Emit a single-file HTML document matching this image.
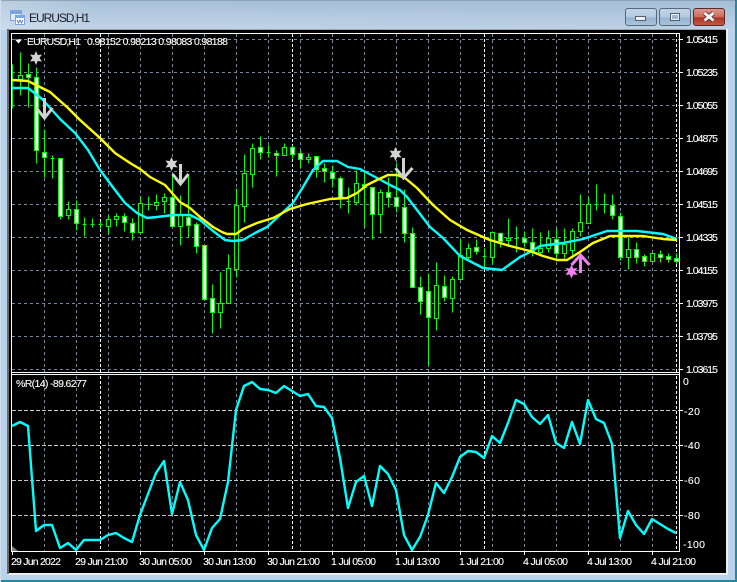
<!DOCTYPE html>
<html><head><meta charset="utf-8"><title>EURUSD,H1</title>
<style>
html,body{margin:0;padding:0;width:737px;height:582px;overflow:hidden;background:#b9d1ea}
svg{display:block}
text{font-family:"Liberation Sans",sans-serif;font-size:10.5px;fill:#fff;stroke:#fff;stroke-width:.12px}
</style></head><body>
<svg width="737" height="582" viewBox="0 0 737 582" xmlns="http://www.w3.org/2000/svg">
<defs>
<linearGradient id="tb" x1="0" y1="0" x2="0" y2="1"><stop offset="0" stop-color="#a3bdd5"/><stop offset="1" stop-color="#bdd2e7"/></linearGradient>
<linearGradient id="tbh" x1="0" y1="0" x2="1" y2="0"><stop offset="0" stop-color="#e8eef4" stop-opacity=".35"/><stop offset=".12" stop-color="#fff" stop-opacity=".05"/><stop offset="1" stop-color="#fff" stop-opacity="0"/></linearGradient>
<linearGradient id="b1" x1="0" y1="0" x2="0" y2="1"><stop offset="0" stop-color="#c2d6e9"/><stop offset=".5" stop-color="#b2cae1"/><stop offset=".55" stop-color="#97b3ce"/><stop offset="1" stop-color="#a9c5df"/></linearGradient>
<linearGradient id="b2" x1="0" y1="0" x2="0" y2="1"><stop offset="0" stop-color="#dd9c8f"/><stop offset=".5" stop-color="#cc6a58"/><stop offset=".55" stop-color="#ad3322"/><stop offset="1" stop-color="#c55b45"/></linearGradient>
</defs>
<!-- window chrome -->
<rect width="737" height="582" fill="#b9d1ea"/>
<rect width="737" height="30" fill="url(#tb)"/>
<rect width="737" height="30" fill="url(#tbh)"/>
<rect x="0" y="0" width="737" height="1" fill="#8ca5bc"/>
<rect x="735" y="0" width="2" height="582" fill="#1d8a9e"/>
<rect x="0" y="580" width="737" height="2" fill="#1d8a9e"/>
<rect x="0" y="0" width="1" height="582" fill="#cfe0f0"/>
<!-- icon -->
<rect x="10.5" y="10.5" width="11" height="10" fill="#dfeafa" stroke="#7fa3de"/>
<rect x="11" y="11" width="10" height="3" fill="#7fa3de"/>
<rect x="15.5" y="15.5" width="9" height="9" fill="#fff" stroke="#7fa3de"/>
<rect x="16" y="16" width="8" height="2" fill="#7fa3de"/>
<path d="M17 20l1.5 3 1.5-3 1.5 3 1.5-3" fill="none" stroke="#5a82c8"/>
<text x="29" y="22" textLength="61" style="font-size:12px;fill:#1c1c28;stroke:none">EURUSD,H1</text>
<!-- caption buttons -->
<rect x="625.5" y="8.5" width="31" height="17" rx="2.5" fill="url(#b1)" stroke="#58697d"/>
<rect x="659.5" y="8.5" width="31" height="17" rx="2.5" fill="url(#b1)" stroke="#58697d"/>
<rect x="693.5" y="8.5" width="31" height="17" rx="2.5" fill="url(#b2)" stroke="#5a2a2a"/>
<rect x="635.5" y="16.5" width="10" height="4" fill="#eef2f6" stroke="#4d5e72"/>
<rect x="670.5" y="13.5" width="9" height="7" fill="#9fb8d0" stroke="#4d5e72"/>
<rect x="671.5" y="14.500" width="7" height="5" fill="none" stroke="#eef2f6"/>
<path d="M704.5 13l9 7.5M713.5 13l-9 7.5" stroke="#4a3030" stroke-width="4.5"/>
<path d="M704.5 13l9 7.5M713.5 13l-9 7.5" stroke="#f4f4f4" stroke-width="2.8"/>
<!-- client frame -->
<rect x="7" y="29" width="721" height="546" fill="#f0f0f0"/>
<rect x="7" y="29" width="719" height="1" fill="#a0a0a0"/>
<rect x="7" y="29" width="2" height="545" fill="#696969"/>
<rect x="9" y="30" width="717" height="543" fill="#000"/>
<!-- grid -->
<g fill="none" stroke-width="1" shape-rendering="crispEdges">
<path stroke="#778899" stroke-dasharray="3 3" d="M12 39.5H679M12 72.5H679M12 105.5H679M12 138.5H679M12 171.5H679M12 204.5H679M12 237.5H679M12 270.5H679M12 303.5H679M12 336.5H679M12 369.5H679"/>
<path stroke="#778899" stroke-dasharray="3 3" d="M44.5 34V372M76.5 34V372M108.5 34V372M140.5 34V372M172.5 34V372M204.5 34V372M236.5 34V372M268.5 34V372M300.5 34V372M332.5 34V372M364.5 34V372M396.5 34V372M428.5 34V372M460.5 34V372M492.5 34V372M524.5 34V372M556.5 34V372M588.5 34V372M620.5 34V372M652.5 34V372"/>
<path stroke="#778899" stroke-dasharray="3 3" d="M44.5 376V551M76.5 376V551M108.5 376V551M140.5 376V551M172.5 376V551M204.5 376V551M236.5 376V551M268.5 376V551M300.5 376V551M332.5 376V551M364.5 376V551M396.5 376V551M428.5 376V551M460.5 376V551M492.5 376V551M524.5 376V551M556.5 376V551M588.5 376V551M620.5 376V551M652.5 376V551"/>
<path stroke="#c8c8c8" stroke-dasharray="4 2" d="M12 410.5H679M12 445.5H679M12 480.5H679M12 515.5H679"/>
<path stroke="#fff" stroke-dasharray="3 2" d="M100.5 34V372M292.5 34V372M484.5 34V372M676.5 34V372M100.5 376V551M292.5 376V551M484.5 376V551M676.5 376V551"/>
</g>
<!-- candles -->
<g transform="translate(.5 .5)" shape-rendering="crispEdges" stroke="#00ff00" stroke-width="1">
<path fill="none" d="M12 64V108M12 99h-1M20 52V95M28 63V107M36 67V163M44 129V177M52 155V178M50 158h4M60 158V219M68 201V219M76 200V230M84 217V236M82 224h4M92 218V227M90 224h4M100 221V228M98 224h4M108 215V234M116 213V226M124 213V231M132 218V240M140 196V233M148 196V210M146 204h4M156 194V210M164 193V213M172 175V226M180 195V245M188 174V237M196 222V253M204 245V300M212 284V333M220 272V328M228 254V303M236 188V277M244 154V222M252 143V187M260 136V159M268 145V157M266 152h4M276 150V176M284 143V155M292 145V158M300 150V167M308 153V163M316 156V177M324 163V182M332 165V187M340 176V208M348 187V213M346 201h4M356 170V205M364 172V227M372 187V239M380 189V233M388 177V207M396 163V212M404 189V242M412 227V287M420 276V314M428 273V365M436 262V330M444 275V301M452 276V312M460 239V279M468 243V261M476 239V254M484 248V268M482 256h4M492 231V264M500 232V247M508 218V244M516 226V252M514 238h4M524 231V247M532 228V256M540 232V256M548 230V252M556 228V260M564 228V258M572 228V258M580 194V236M588 197V223M596 184V210M594 204h4M604 193V213M602 204h4M612 194V219M620 212V260M628 237V269M636 242V263M644 254V266M652 253V261M660 250V262M668 253V262M676 253V263"/>
<path fill="#000" d="M18 75h4v4h-4zM66 209h4v6h-4zM106 219h4v7h-4zM114 216h4v3h-4zM138 203h4v29h-4zM154 202h4v3h-4zM162 197h4v4h-4zM178 215h4v11h-4zM218 303h4v9h-4zM226 268h4v35h-4zM234 205h4v64h-4zM242 173h4v33h-4zM250 148h4v26h-4zM282 147h4v8h-4zM306 157h4v2h-4zM354 183h4v19h-4zM378 192h4v22h-4zM434 285h4v33h-4zM450 279h4v19h-4zM458 255h4v24h-4zM466 248h4v9h-4zM490 232h4v25h-4zM506 238h4v2h-4zM538 248h4v4h-4zM546 238h4v10h-4zM562 244h4v9h-4zM570 231h4v19h-4zM578 222h4v9h-4zM586 204h4v19h-4zM626 249h4v8h-4zM650 253h4v8h-4z"/>
<path fill="#fff" d="M26 74h4v3h-4zM34 77h4v73h-4zM42 152h4v5h-4zM58 158h4v58h-4zM74 209h4v14h-4zM122 216h4v6h-4zM130 223h4v9h-4zM170 197h4v29h-4zM186 217h4v8h-4zM194 224h4v22h-4zM202 245h4v54h-4zM210 298h4v14h-4zM258 147h4v5h-4zM274 153h4v2h-4zM290 147h4v7h-4zM298 153h4v6h-4zM314 156h4v13h-4zM322 168h4v3h-4zM330 172h4v6h-4zM338 178h4v20h-4zM362 184h4v3h-4zM370 187h4v27h-4zM386 192h4v5h-4zM394 197h4v9h-4zM402 207h4v26h-4zM410 233h4v54h-4zM418 287h4v14h-4zM426 291h4v26h-4zM442 286h4v11h-4zM474 247h4v4h-4zM498 233h4v8h-4zM522 238h4v4h-4zM530 242h4v10h-4zM554 239h4v14h-4zM610 205h4v10h-4zM618 216h4v41h-4zM634 249h4v8h-4zM642 256h4v5h-4zM658 254h4v3h-4zM666 256h4v3h-4zM674 258h4v3h-4z"/>
</g>
<!-- MAs -->
<g fill="none" stroke-width="2.4" stroke-linejoin="round">
<polyline stroke="#00ffff" points="12,88 28,88 42,99 60,119 75,133 88,150 100,170 115,190 125,203 137,213 147,218 157,217 173,215 190,215 200,220 213,231 225,240 233,241 243,240 255,233 267,227 280,215 293,203 303,187 313,170 323,161 337,161 348,167 360,169 377,178 390,185 400,190 407,197 417,210 430,227 443,238 460,256 483,268 502,270 520,257 530,252 540,246 563,243 583,239 607,231 637,231 663,234 677,239"/>
<polyline stroke="#ffff00" points="12,80 28,81 36,85 50,92 68,108 80,120 100,138 115,153 130,163 140,169 150,177 165,185 180,202 190,208 200,217 213,227 222,232 227,234 236,234 243,229 257,223 273,218 290,209 307,204 330,199 347,198 357,193 367,185 377,180 388,175 397,175 405,178 417,188 433,205 450,220 467,230 490,240 510,246 530,251 543,256 557,260 567,260 580,252 593,243 610,236 643,236 663,239 677,240"/>
<polyline stroke="#00ffff" points="12,426 20,422 28,426 36,531 44,525 52,525 60,548 68,543 76,550 84,540 100,540 108,535 116,533 124,538 132,542 140,515 148,494 156,473 164,461 172,514 180,482 188,500 196,535 204,550 212,528 220,519 228,482 236,410 244,386 252,382 260,389 268,390 276,393 284,386 292,391 300,396 308,394 316,406 324,407 332,418 340,458 348,508 356,482 364,476 372,506 380,466 388,474 396,490 404,535 412,550 420,537 428,515 436,483 444,493 452,477 460,457 468,451 476,452 484,458 492,436 500,443 508,423 516,400 524,404 532,417 540,424 548,415 556,443 564,448 572,422 580,444 588,400 596,419 604,423 612,444 620,538 628,511 636,525 644,534 652,519 660,524 668,529 676,533"/>
</g>
<!-- signals -->
<g fill="none" stroke="#d3d3d3" stroke-width="3">
<path d="M44.5 98V118M36.5 108L44.5 118L52.5 108"/>
<path d="M180.5 164V184M172.5 174L180.5 184L188.5 174"/>
<path d="M403.500 158V178M395.500 168L403.500 178L412.500 168"/>
</g>
<g fill="#d3d3d3">
<polygon transform="translate(36 58)" points="0,-7 1.75,-3 6,-3.500 3.500,0 6,3.500 1.75,3 0,7 -1.75,3 -6,3.500 -3.500,0 -6,-3.500 -1.75,-3"/>
<polygon transform="translate(171.500 164)" points="0,-7 1.75,-3 6,-3.500 3.500,0 6,3.500 1.75,3 0,7 -1.75,3 -6,3.500 -3.500,0 -6,-3.500 -1.75,-3"/>
<polygon transform="translate(395.500 154)" points="0,-7 1.75,-3 6,-3.500 3.500,0 6,3.500 1.75,3 0,7 -1.75,3 -6,3.500 -3.500,0 -6,-3.500 -1.75,-3"/>
</g>
<path fill="none" stroke="#ee82ee" stroke-width="3" d="M580.500 255V273M571.500 265L580.500 255L589.500 265"/>
<polygon transform="translate(571.500 271.500)" fill="#ee82ee" points="0,-7 1.75,-3 6,-3.500 3.500,0 6,3.500 1.75,3 0,7 -1.75,3 -6,3.500 -3.500,0 -6,-3.500 -1.75,-3"/>
<!-- pane borders -->
<g fill="#fff" shape-rendering="crispEdges">
<rect x="11" y="33" width="669" height="1"/>
<rect x="11" y="33" width="1" height="519"/>
<rect x="679" y="33" width="1" height="519"/>
<rect x="11" y="372" width="669" height="1"/>
<rect x="11" y="374" width="669" height="1"/>
<rect x="11" y="551" width="669" height="1"/>
<!-- right ticks -->
<path d="M680 39h3v1h-3zM680 72h3v1h-3zM680 105h3v1h-3zM680 138h3v1h-3zM680 171h3v1h-3zM680 204h3v1h-3zM680 237h3v1h-3zM680 270h3v1h-3zM680 303h3v1h-3zM680 336h3v1h-3zM680 369h3v1h-3zM680 410h3v1h-3zM680 445h3v1h-3zM680 480h3v1h-3zM680 515h3v1h-3z"/>
<!-- bottom ticks -->
<path d="M12 552h1v3h-1zM76 552h1v3h-1zM140 552h1v3h-1zM204 552h1v3h-1zM268 552h1v3h-1zM332 552h1v3h-1zM396 552h1v3h-1zM460 552h1v3h-1zM524 552h1v3h-1zM588 552h1v3h-1zM652 552h1v3h-1z"/>
</g>
<polygon points="12,546 12,551 18,551" fill="#808080"/>
<polygon points="15,39.500 22,39.500 18.500,43.500" fill="#fff"/>
<!-- labels -->
<text x="27" y="45" textLength="54">EURUSD,H1</text>
<text x="87" y="45" textLength="141">0.98152 0.98213 0.98083 0.98188</text>
<text x="16" y="387" textLength="71">%R(14) -89.6277</text>
<g>
<text x="686" y="43" textLength="32">1.05415</text>
<text x="686" y="76" textLength="32">1.05235</text>
<text x="686" y="109" textLength="32">1.05055</text>
<text x="686" y="142" textLength="32">1.04875</text>
<text x="686" y="175" textLength="32">1.04695</text>
<text x="686" y="208" textLength="32">1.04515</text>
<text x="686" y="241" textLength="32">1.04335</text>
<text x="686" y="274" textLength="32">1.04155</text>
<text x="686" y="307" textLength="32">1.03975</text>
<text x="686" y="340" textLength="32">1.03795</text>
<text x="686" y="373" textLength="32">1.03615</text>
<text x="683" y="385">0</text>
<text x="684" y="415" textLength="16">-20</text>
<text x="684" y="449" textLength="16">-40</text>
<text x="684" y="484" textLength="16">-60</text>
<text x="684" y="519" textLength="16">-80</text>
<text x="683" y="548" textLength="22">-100</text>
</g>
<g>
<text x="11" y="565" textLength="50">29 Jun 2022</text>
<text x="75" y="565" textLength="53">29 Jun 21:00</text>
<text x="139" y="565" textLength="53">30 Jun 05:00</text>
<text x="203" y="565" textLength="53">30 Jun 13:00</text>
<text x="267" y="565" textLength="53">30 Jun 21:00</text>
<text x="331" y="565" textLength="45">1 Jul 05:00</text>
<text x="395" y="565" textLength="45">1 Jul 13:00</text>
<text x="459" y="565" textLength="45">1 Jul 21:00</text>
<text x="523" y="565" textLength="45">4 Jul 05:00</text>
<text x="587" y="565" textLength="45">4 Jul 13:00</text>
<text x="651" y="565" textLength="45">4 Jul 21:00</text>
</g>
</svg>
</body></html>
